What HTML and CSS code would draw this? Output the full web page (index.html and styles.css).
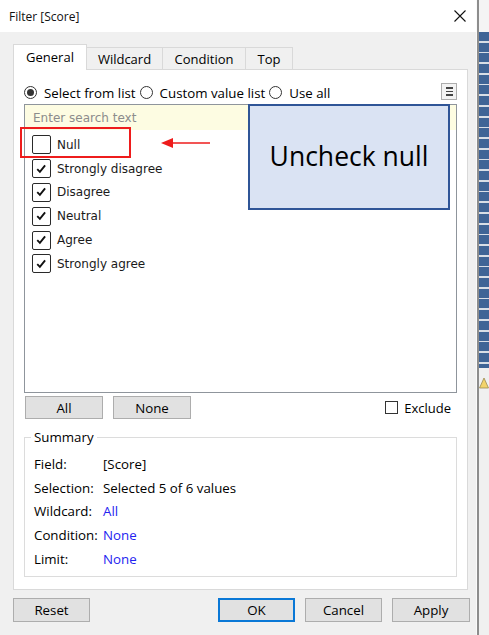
FILE: index.html
```html
<!DOCTYPE html>
<html>
<head>
<meta charset="utf-8">
<link rel="stylesheet" href="styles.css">
</head>
<body>
<div class="screen">
  <div class="dialog">
    <div class="titlebar">
      <span class="title">Filter [Score]</span>
      <svg class="close" width="12" height="12" viewBox="0 0 12 12"><path d="M0.5 0.5 L11.5 11.5 M11.5 0.5 L0.5 11.5" stroke="#111" stroke-width="1.1" fill="none"/></svg>
    </div>
    <div class="content">
      <div class="tabs">
        <div class="tab tab-active tab-general">General</div>
        <div class="tab tab-wildcard">Wildcard</div>
        <div class="tab tab-condition">Condition</div>
        <div class="tab tab-top">Top</div>
      </div>
      <div class="panel">
        <div class="radio-row">
          <span class="radio radio-on"></span><span class="radio-label">Select from list</span>
          <span class="radio"></span><span class="radio-label">Custom value list</span>
          <span class="radio"></span><span class="radio-label">Use all</span>
          <span class="menu-btn"><span></span><span></span><span></span></span>
        </div>
        <div class="listbox">
          <div class="search">Enter search text</div>
          <ul class="items">
            <li class="item"><span class="cb"></span><span>Null</span></li>
            <li class="item"><span class="cb"><svg viewBox="0 0 18 18" width="18" height="18"><path d="M4.5 9.2 L7.3 12 L12.8 5.2" stroke="#111" stroke-width="2" fill="none"/></svg></span><span>Strongly disagree</span></li>
            <li class="item"><span class="cb"><svg viewBox="0 0 18 18" width="18" height="18"><path d="M4.5 9.2 L7.3 12 L12.8 5.2" stroke="#111" stroke-width="2" fill="none"/></svg></span><span>Disagree</span></li>
            <li class="item"><span class="cb"><svg viewBox="0 0 18 18" width="18" height="18"><path d="M4.5 9.2 L7.3 12 L12.8 5.2" stroke="#111" stroke-width="2" fill="none"/></svg></span><span>Neutral</span></li>
            <li class="item"><span class="cb"><svg viewBox="0 0 18 18" width="18" height="18"><path d="M4.5 9.2 L7.3 12 L12.8 5.2" stroke="#111" stroke-width="2" fill="none"/></svg></span><span>Agree</span></li>
            <li class="item"><span class="cb"><svg viewBox="0 0 18 18" width="18" height="18"><path d="M4.5 9.2 L7.3 12 L12.8 5.2" stroke="#111" stroke-width="2" fill="none"/></svg></span><span>Strongly agree</span></li>
          </ul>
        </div>
        <div class="btn-row">
          <button class="btn btn-all">All</button>
          <button class="btn btn-none">None</button>
          <span class="exclude"><span class="cb-small"></span>Exclude</span>
        </div>
        <fieldset class="summary">
          <legend>Summary</legend>
          <div class="srow"><span class="slabel">Field:</span><span>[Score]</span></div>
          <div class="srow"><span class="slabel">Selection:</span><span>Selected 5 of 6 values</span></div>
          <div class="srow"><span class="slabel">Wildcard:</span><span class="blue">All</span></div>
          <div class="srow"><span class="slabel">Condition:</span><span class="blue">None</span></div>
          <div class="srow"><span class="slabel">Limit:</span><span class="blue">None</span></div>
        </fieldset>
      </div>
      <div class="footer">
        <button class="btn fbtn">Reset</button>
        <button class="btn fbtn btn-ok">OK</button>
        <button class="btn fbtn">Cancel</button>
        <button class="btn fbtn btn-apply">Apply</button>
      </div>
    </div>
  </div>
  <div class="strip">
    <div class="strip-top"></div>
    <div class="strip-blue"></div>
    <div class="strip-bottom"><svg class="warn" width="10" height="12" viewBox="0 0 10 12"><path d="M5 1 L9.5 11 L0.5 11 Z" fill="#f2d36b" stroke="#9a8a50" stroke-width="0.8"/></svg></div>
  </div>
</div>

<div class="highlight"></div>
<svg class="arrow" width="52" height="12" viewBox="0 0 52 12"><path d="M12 6 L50 6" stroke="#ee1c1c" stroke-width="1.5"/><path d="M1 6 L13 1 L13 11 Z" fill="#ee1c1c"/></svg>
<div class="callout">Uncheck null</div>
</body>
</html>
```

FILE: styles.css
```css
* { box-sizing: border-box; }

body {
  margin: 0;
  width: 489px;
  height: 635px;
  overflow: hidden;
  position: relative;
  font-family: "Open Sans", "Noto Sans", sans-serif;
  font-size: 13.3px;
  color: #000;
  background: #f0f0f0;
}

.screen {
  display: flex;
  height: 635px;
}

.dialog {
  width: 482px;
  display: flex;
  flex-direction: column;
  background: #f0f0f0;
  border-right: 1px solid #fafafa;
}

.titlebar {
  height: 32px;
  background: #fff;
  display: flex;
  align-items: center;
  justify-content: space-between;
  padding: 0 10px 0 9px;
}

.title {
  font-size: 12px;
  color: #111;
}

.content {
  padding: 12px 0 0 13px;
}

.tabs {
  display: flex;
  align-items: flex-end;
  height: 25px;
}

.tab {
  height: 22px;
  border: 1px solid #d9d9d9;
  border-bottom: none;
  background: #f0f0f0;
  display: flex;
  align-items: center;
  justify-content: center;
  font-size: 13px;
  margin-left: -1px;
}

.tab-general { width: 74px; margin-left: 0; }
.tab-wildcard { width: 77px; }
.tab-condition { width: 84px; }
.tab-top { width: 48px; }

.tab-active {
  height: 26px;
  background: #fff;
  margin-bottom: -1px;
  position: relative;
  z-index: 1;
  padding-bottom: 1px;
}

.panel {
  width: 455px;
  height: 521px;
  background: #fff;
  border: 1px solid #d9d9d9;
  padding: 0 10px;
}

.radio-row {
  margin-top: 11px;
  height: 23px;
  display: flex;
  align-items: center;
}

.radio {
  width: 13px;
  height: 13px;
  border: 1px solid #333;
  border-radius: 50%;
  display: flex;
  align-items: center;
  justify-content: center;
  flex: none;
}

.radio-on::after {
  content: "";
  width: 7px;
  height: 7px;
  border-radius: 50%;
  background: #333;
}

.radio-label {
  margin: 0 4px 0 7px;
  white-space: nowrap;
}

.menu-btn {
  margin-left: auto;
  align-self: flex-start;
  margin-top: 2px;
  width: 16px;
  height: 17px;
  border: 1px solid #adadad;
  background: #f3f3f3;
  display: flex;
  flex-direction: column;
  align-items: center;
  justify-content: center;
  gap: 2px;
}

.menu-btn span {
  width: 7px;
  height: 1.5px;
  background: #444;
}

.listbox {
  height: 289px;
  border: 1px solid #8f959c;
  background: #fff;
}

.search {
  height: 25px;
  background: #fdfce2;
  color: #8c8c8c;
  font-family: "DejaVu Sans", sans-serif;
  font-size: 12px;
  display: flex;
  align-items: center;
  padding: 1px 0 0 8px;
}

.items {
  list-style: none;
  margin: 3px 0 0;
  padding: 0;
}

.item {
  height: 23.8px;
  display: flex;
  align-items: center;
  font-family: "DejaVu Sans", sans-serif;
  font-size: 12px;
  color: #1a1a1a;
}

.cb {
  width: 19px;
  height: 19px;
  border: 1.5px solid #2a2a2a;
  border-radius: 2px;
  margin: 0 6px 0 7px;
  display: flex;
  align-items: center;
  justify-content: center;
  background: #fff;
}

.cb svg { display: block; }

.btn-row {
  margin-top: 3px;
  display: flex;
  align-items: center;
}

.btn {
  font-family: "Open Sans", "Noto Sans", sans-serif;
  font-size: 13.3px;
  color: #000;
  background: #e1e1e1;
  border: 1px solid #adadad;
  padding: 0;
  margin: 0;
  display: flex;
  align-items: center;
  justify-content: center;
}

.btn-all { width: 78px; height: 23px; margin-left: 1px; }
.btn-none { width: 78px; height: 23px; margin-left: 10px; }

.exclude {
  margin-left: auto;
  margin-right: 6px;
  display: flex;
  align-items: center;
  font-size: 13px;
}

.cb-small {
  width: 13px;
  height: 13px;
  border: 1px solid #333;
  margin-right: 6px;
  background: #fff;
}

.summary {
  margin: 9px 0 0;
  height: 149px;
  border: 1px solid #dcdcdc;
  padding: 0 9px;
  min-width: 0;
}

.summary legend {
  margin-left: -3px;
  padding: 0 3px;
  line-height: 18px;
}

.srow {
  height: 23.7px;
  display: flex;
  align-items: center;
}

.srow:first-of-type { margin-top: 6px; }

.slabel {
  width: 69px;
  flex: none;
}

.blue { color: #2323f0; }

.footer {
  margin-top: 8px;
  width: 457px;
  display: flex;
}

.fbtn {
  width: 77px;
  height: 24px;
  margin-left: 10px;
}

.fbtn:first-child { margin-left: 0; }

.btn-ok {
  margin-left: auto;
  border: 2px solid #0a78d6;
}

.btn-apply { width: 78px; }

.strip {
  flex: 1;
  display: flex;
  flex-direction: column;
  border-left: 2px solid #8d8d8d;
}

.strip-top {
  height: 32px;
  background: #f4f4f4;
}

.strip-blue {
  height: 336px;
  background: repeating-linear-gradient(to bottom, #3f6496 0px, #3f6496 9px, #d8dee6 9px, #d8dee6 10.7px);
}

.strip-bottom {
  flex: 1;
  background: #f0f0f0;
  padding-top: 9px;
}

.warn { display: block; margin-left: 0; }

.highlight {
  position: absolute;
  left: 20px;
  top: 127px;
  width: 111px;
  height: 31px;
  border: 2px solid #ee1c1c;
}

.arrow {
  position: absolute;
  left: 160px;
  top: 137px;
}

.callout {
  position: absolute;
  left: 248px;
  top: 104px;
  width: 202px;
  height: 106px;
  border: 2px solid #2f5597;
  background: #dae3f3;
  display: flex;
  align-items: center;
  justify-content: center;
  font-family: "Open Sans", "Noto Sans", sans-serif;
  font-size: 26.5px;
  color: #000;
  padding-bottom: 2px;
}
```
